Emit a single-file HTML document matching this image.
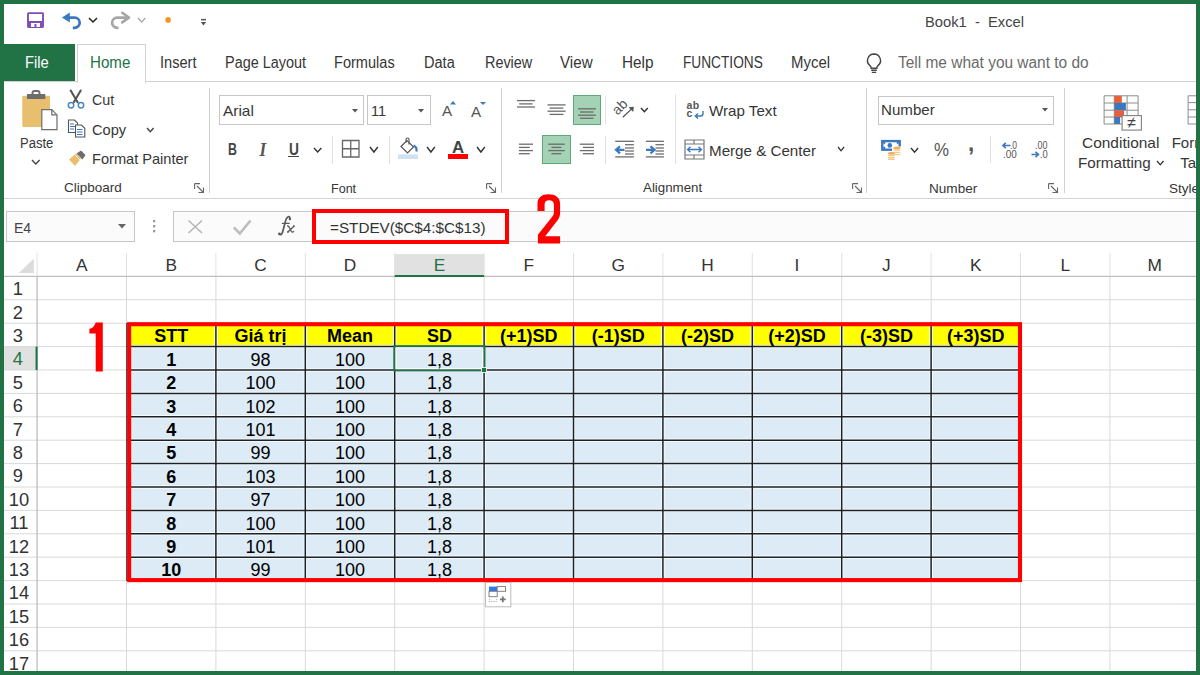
<!DOCTYPE html>
<html><head><meta charset="utf-8"><style>
html,body{margin:0;padding:0}
body{width:1200px;height:675px;overflow:hidden;position:relative;background:#fff;font-family:"Liberation Sans",sans-serif}
#frame{position:absolute;left:0;top:0;width:1192px;height:667px;border:4px solid #217346;pointer-events:none}
.t{position:absolute;white-space:nowrap;line-height:1;font-family:"Liberation Sans",sans-serif}
.r{position:absolute;box-sizing:content-box}
.s{position:absolute;overflow:visible}
</style></head><body>
<svg class="s" style="left:27px;top:12px" width="17" height="16" viewBox="0 0 17 16"><path d="M1.6 1.1h13.8a0.6 0.6 0 0 1 .6.6v12.8a0.6 0.6 0 0 1-.6.6H1.6a0.6 0.6 0 0 1-.6-.6V1.7a0.6 0.6 0 0 1 .6-.6z" fill="none" stroke="#7f4fb9" stroke-width="1.9"/><rect x="1" y="9" width="15" height="6" fill="#7f4fb9"/><rect x="4" y="11" width="9" height="4" fill="#fff"/><rect x="7.5" y="12" width="2" height="3" fill="#7f4fb9"/></svg>
<svg class="s" style="left:61px;top:12px" width="21" height="17" viewBox="0 0 21 17"><path d="M1 5.6L8.8 0.6V10.6z" fill="#3a78c0"/><path d="M8 5.6H13.6A5.1 5.1 0 0 1 13.6 15.8H11.8" fill="none" stroke="#3a78c0" stroke-width="2.7"/></svg>
<svg class="s" style="left:87.7px;top:17px" width="10" height="6" viewBox="0 0 10 6"><path d="M1 1L5.0 5L9 1" fill="none" stroke="#222" stroke-width="1.5"/></svg>
<svg class="s" style="left:109px;top:12px" width="21" height="17" viewBox="0 0 21 17"><path d="M20 5.6L13.2 0.8M20 5.6L13.2 10.4" fill="none" stroke="#a6a6a6" stroke-width="2.6" stroke-linecap="round"/><path d="M18 5.6H8.2A5.1 5.1 0 0 0 8.2 15.8H9.5" fill="none" stroke="#a6a6a6" stroke-width="2.7"/></svg>
<svg class="s" style="left:137px;top:17px" width="9.3" height="6" viewBox="0 0 9.3 6"><path d="M1 1L4.65 5L8.3 1" fill="none" stroke="#a6a6a6" stroke-width="1.2"/></svg>
<svg class="s" style="left:164px;top:16px" width="8" height="8" viewBox="0 0 8 8"><circle cx="4.1" cy="3.9" r="2.8" fill="#f7941d"/></svg>
<svg class="s" style="left:199px;top:17px" width="9" height="10" viewBox="0 0 9 10"><rect x="2" y="1.9" width="5" height="1.5" fill="#555"/><path d="M1.8 4.9h5.4L4.5 8.4z" fill="#555"/></svg>
<div class="t" style="left:925.00px;top:14.00px;font-size:15px;color:#444;transform:scaleX(0.9814);transform-origin:0.00px 0;">Book1&nbsp;&nbsp;-&nbsp;&nbsp;Excel</div>
<div class="r" style="left:4px;top:44px;width:71.00px;height:37.00px;background:#217346;"></div>
<div class="t" style="left:25.00px;top:55.00px;font-size:15.8px;color:#fff;transform:scaleX(0.9317);transform-origin:0.00px 0;">File</div>
<div class="r" style="left:77px;top:44px;width:67px;height:38px;border:1px solid #d2d2d2;border-bottom:none;background:#fff"></div>
<div class="r" style="left:4px;top:81px;width:73.00px;height:1.00px;background:#d2d2d2;"></div>
<div class="r" style="left:145px;top:81px;width:1051.00px;height:1.00px;background:#d2d2d2;"></div>
<div class="t" style="left:89.60px;top:55.00px;font-size:15.8px;color:#217346;transform:scaleX(0.9577);transform-origin:0.00px 0;">Home</div>
<div class="t" style="left:159.50px;top:55.00px;font-size:15.8px;color:#363636;transform:scaleX(0.9241);transform-origin:0.00px 0;">Insert</div>
<div class="t" style="left:224.80px;top:55.00px;font-size:15.8px;color:#363636;transform:scaleX(0.9141);transform-origin:0.00px 0;">Page Layout</div>
<div class="t" style="left:334.00px;top:55.00px;font-size:15.8px;color:#363636;transform:scaleX(0.9213);transform-origin:0.00px 0;">Formulas</div>
<div class="t" style="left:424.20px;top:55.00px;font-size:15.8px;color:#363636;transform:scaleX(0.9217);transform-origin:0.00px 0;">Data</div>
<div class="t" style="left:484.80px;top:55.00px;font-size:15.8px;color:#363636;transform:scaleX(0.9108);transform-origin:0.00px 0;">Review</div>
<div class="t" style="left:560.00px;top:55.00px;font-size:15.8px;color:#363636;transform:scaleX(0.9597);transform-origin:0.00px 0;">View</div>
<div class="t" style="left:622.00px;top:55.00px;font-size:15.8px;color:#363636;transform:scaleX(0.9702);transform-origin:0.00px 0;">Help</div>
<div class="t" style="left:682.50px;top:55.00px;font-size:15.8px;color:#363636;transform:scaleX(0.8656);transform-origin:0.00px 0;">FUNCTIONS</div>
<div class="t" style="left:791.00px;top:55.00px;font-size:15.8px;color:#363636;transform:scaleX(0.9457);transform-origin:0.00px 0;">Mycel</div>
<svg class="s" style="left:864px;top:52px" width="20" height="22" viewBox="0 0 20 22"><path d="M10 2a6.5 6.5 0 0 0-4 11.6c.8.7 1.2 1.6 1.2 2.6h5.6c0-1 .4-1.9 1.2-2.6A6.5 6.5 0 0 0 10 2z" fill="none" stroke="#444" stroke-width="1.4"/><path d="M7.2 18.2h5.6M7.8 20.4h4.4" stroke="#444" stroke-width="1.4"/></svg>
<div class="t" style="left:898.00px;top:55.00px;font-size:15.8px;color:#6a6a6a;transform:scaleX(0.9781);transform-origin:0.00px 0;">Tell me what you want to do</div>
<div class="r" style="left:4px;top:198px;width:1192.00px;height:1.00px;background:#d4d4d4;"></div>
<div class="r" style="left:208.5px;top:88px;width:1.00px;height:105.00px;background:#d0d0d0;"></div>
<div class="r" style="left:501px;top:88px;width:1.00px;height:105.00px;background:#d0d0d0;"></div>
<div class="r" style="left:866px;top:88px;width:1.00px;height:105.00px;background:#d0d0d0;"></div>
<div class="r" style="left:1063.7px;top:88px;width:1.00px;height:105.00px;background:#d0d0d0;"></div>
<svg class="s" style="left:21px;top:90px" width="38" height="41" viewBox="0 0 38 41"><rect x="1.3" y="5.7" width="27.7" height="31.3" rx="1" fill="#e8bf6e"/><path d="M6 4h18.3v5H6z" fill="#6d6d6d"/><rect x="11.5" y="1" width="7" height="5" rx="2" fill="none" stroke="#6d6d6d" stroke-width="2"/><path d="M20.8 19.7h10l5.2 5.2v14.8H20.8z" fill="#fff" stroke="#6d6d6d" stroke-width="1.2"/><path d="M30.8 19.7v5.2h5.2" fill="none" stroke="#6d6d6d" stroke-width="1.2"/></svg>
<div class="t" style="left:20.00px;top:135.70px;font-size:14px;color:#363636;transform:scaleX(0.9309);transform-origin:0.00px 0;">Paste</div>
<svg class="s" style="left:31.4px;top:159px" width="9.6" height="6" viewBox="0 0 9.6 6"><path d="M1 1L4.8 5L8.6 1" fill="none" stroke="#444" stroke-width="1.4"/></svg>
<svg class="s" style="left:66px;top:88px" width="20" height="22" viewBox="0 0 20 22"><path d="M4.7 2.5L11.6 14.2M14.7 2.5L7.8 14.2" stroke="#555" stroke-width="2.1" fill="none" stroke-linecap="round"/><circle cx="5" cy="17.3" r="2.7" fill="none" stroke="#4a86c8" stroke-width="1.5"/><circle cx="15" cy="17.3" r="2.7" fill="none" stroke="#4a86c8" stroke-width="1.5"/></svg>
<div class="t" style="left:91.50px;top:92.20px;font-size:15px;color:#363636;transform:scaleX(0.9518);transform-origin:0.00px 0;">Cut</div>
<svg class="s" style="left:67px;top:119px" width="20" height="20" viewBox="0 0 20 20"><path d="M1.5 1h6l3 3v9.5H1.5z" fill="#fff" stroke="#555" stroke-width="1.1"/><path d="M3 5h4M3 7.5h5M3 10h4" stroke="#3a78c0" stroke-width="1.1"/><path d="M8.5 6h6l3.3 3.3V18H8.5z" fill="#fff" stroke="#555" stroke-width="1.1"/><path d="M10 10.5h5.5M10 13h5.5M10 15.5h5.5" stroke="#3a78c0" stroke-width="1.1"/></svg>
<div class="t" style="left:91.50px;top:121.50px;font-size:15px;color:#363636;transform:scaleX(0.9736);transform-origin:0.00px 0;">Copy</div>
<svg class="s" style="left:146.4px;top:126.5px" width="8.6" height="5.8" viewBox="0 0 8.6 5.8"><path d="M1 1L4.3 4.8L7.6 1" fill="none" stroke="#444" stroke-width="1.4"/></svg>
<svg class="s" style="left:68px;top:150px" width="19" height="17" viewBox="0 0 19 17"><path d="M1 9.5l7-6 5 5-6 7.5z" fill="#e8bf6e"/><path d="M8.5 3.5l4.5-3 4.5 4.5-3 4.5z" fill="#6d6d6d"/><path d="M7.5 5.5l5 5" stroke="#fff" stroke-width="1"/></svg>
<div class="t" style="left:91.90px;top:151.40px;font-size:15px;color:#363636;transform:scaleX(0.9725);transform-origin:0.00px 0;">Format Painter</div>
<div class="t" style="left:63.60px;top:181.45px;font-size:13.5px;color:#363636;transform:scaleX(1.0003);transform-origin:0.00px 0;">Clipboard</div>
<svg class="s" style="left:194px;top:183px" width="11" height="10" viewBox="0 0 11 10"><path d="M0.6 0.6h5.4M0.6 0.6v5.4" stroke="#666" stroke-width="1.1"/><path d="M3 3l6.5 6.5M9.5 4.5v5h-5" fill="none" stroke="#666" stroke-width="1.1"/></svg>
<div class="r" style="left:219px;top:95px;width:143px;height:27.5px;border:1px solid #c6c6c6;background:#fff"></div>
<div class="t" style="left:222.70px;top:102.60px;font-size:15px;color:#363636;transform:scaleX(1.0267);transform-origin:0.00px 0;">Arial</div>
<svg class="s" style="left:352px;top:108.5px" width="6" height="3.5" viewBox="0 0 6 3.5"><path d="M0 0h6L3 3.5z" fill="#555"/></svg>
<div class="r" style="left:367px;top:95px;width:61.5px;height:27.5px;border:1px solid #c6c6c6;background:#fff"></div>
<div class="t" style="left:370.50px;top:102.60px;font-size:15px;color:#363636;transform:scaleX(0.9615);transform-origin:0.00px 0;">11</div>
<svg class="s" style="left:418px;top:108.5px" width="6" height="3.5" viewBox="0 0 6 3.5"><path d="M0 0h6L3 3.5z" fill="#555"/></svg>
<div class="t" style="left:442.00px;top:102.70px;font-size:15px;color:#555;transform:scaleX(1.0149);transform-origin:0.00px 0;">A</div>
<svg class="s" style="left:450px;top:100.5px" width="6" height="3.5" viewBox="0 0 6 3.5"><path d="M0 3.5h6L3 0z" fill="#3a78c0"/></svg>
<div class="t" style="left:471.40px;top:103.80px;font-size:15px;color:#555;transform:scaleX(1.0149);transform-origin:0.00px 0;">A</div>
<svg class="s" style="left:479.6px;top:101.5px" width="6" height="3" viewBox="0 0 6 3"><path d="M0 0h6L3 3z" fill="#3a78c0"/></svg>
<div class="t" style="left:228.30px;top:140.95px;font-size:16.5px;color:#444;font-weight:bold;transform:scaleX(0.7492);transform-origin:0.00px 0;">B</div>
<div class="t" style="left:259.5px;top:140.5px;font-family:'Liberation Serif';font-style:italic;font-size:17px;color:#555;font-weight:bold;transform:scaleY(1.08);transform-origin:0 0">I</div>
<div class="t" style="left:289.00px;top:141.70px;font-size:16px;color:#444;font-weight:bold;transform:scaleX(0.8594);transform-origin:0.00px 0;">U</div>
<div class="r" style="left:288.3px;top:156.2px;width:11.20px;height:1.20px;background:#444;"></div>
<svg class="s" style="left:312.6px;top:146.7px" width="9.3" height="6" viewBox="0 0 9.3 6"><path d="M1 1L4.65 5L8.3 1" fill="none" stroke="#333" stroke-width="1.4"/></svg>
<div class="r" style="left:332px;top:136px;width:1.00px;height:28.00px;background:#e1e1e1;"></div>
<svg class="s" style="left:341px;top:139px" width="20" height="19" viewBox="0 0 20 19"><path d="M1.5 1.5h16.5v16.5H1.5zM9.75 1.5v16.5M1.5 9.75h16.5" fill="none" stroke="#666" stroke-width="1.3"/></svg>
<svg class="s" style="left:369.4px;top:146px" width="9.8" height="7" viewBox="0 0 9.8 7"><path d="M1 1L4.9 6L8.8 1" fill="none" stroke="#333" stroke-width="1.4"/></svg>
<div class="r" style="left:389px;top:136px;width:1.00px;height:28.00px;background:#e1e1e1;"></div>
<svg class="s" style="left:397px;top:138px" width="22" height="22" viewBox="0 0 22 22"><rect x="1" y="16.4" width="20" height="4.6" fill="#cfe2f3"/><path d="M4 8.5l6-6 6.5 6.5-6 6z" fill="#fff" stroke="#555" stroke-width="1.2"/><path d="M9 4.5V1.5a1.5 1.5 0 0 1 3 0v5" fill="none" stroke="#555" stroke-width="1.1"/><path d="M16.5 7.5c2.5 1 3.5 3 3 6" fill="none" stroke="#3a78c0" stroke-width="2.2"/></svg>
<svg class="s" style="left:426px;top:146px" width="9.8" height="7" viewBox="0 0 9.8 7"><path d="M1 1L4.9 6L8.8 1" fill="none" stroke="#333" stroke-width="1.4"/></svg>
<div class="t" style="left:451.80px;top:138.70px;font-size:17px;color:#444;font-weight:bold;transform:scaleX(0.9886);transform-origin:0.00px 0;">A</div>
<div class="r" style="left:447.8px;top:154.1px;width:20.30px;height:5.20px;background:#ff0000;"></div>
<svg class="s" style="left:475.6px;top:146px" width="9.8" height="7" viewBox="0 0 9.8 7"><path d="M1 1L4.9 6L8.8 1" fill="none" stroke="#333" stroke-width="1.4"/></svg>
<div class="t" style="left:331.20px;top:181.65px;font-size:13.5px;color:#363636;transform:scaleX(0.9296);transform-origin:0.00px 0;">Font</div>
<svg class="s" style="left:486.2px;top:183.3px" width="11" height="10" viewBox="0 0 11 10"><path d="M0.6 0.6h5.4M0.6 0.6v5.4" stroke="#666" stroke-width="1.1"/><path d="M3 3l6.5 6.5M9.5 4.5v5h-5" fill="none" stroke="#666" stroke-width="1.1"/></svg>
<svg class="s" style="left:0px;top:0px" width="1200" height="675" viewBox="0 0 1200 675"><line x1="517" x2="535" y1="100.6" y2="100.6" stroke="#6d6d6d" stroke-width="1.3"/><line x1="519.2" x2="532.6" y1="103.9" y2="103.9" stroke="#6d6d6d" stroke-width="1.3"/><line x1="517" x2="535" y1="107" y2="107" stroke="#6d6d6d" stroke-width="1.3"/></svg>
<svg class="s" style="left:0px;top:0px" width="1200" height="675" viewBox="0 0 1200 675"><line x1="547.5" x2="565.6" y1="104.9" y2="104.9" stroke="#6d6d6d" stroke-width="1.3"/><line x1="549.6" x2="563.4" y1="108.1" y2="108.1" stroke="#6d6d6d" stroke-width="1.3"/><line x1="547.5" x2="565.6" y1="111.2" y2="111.2" stroke="#6d6d6d" stroke-width="1.3"/><line x1="549.6" x2="563.4" y1="114.4" y2="114.4" stroke="#6d6d6d" stroke-width="1.3"/></svg>
<div class="r" style="left:573px;top:95.4px;width:26px;height:27.3px;border:1px solid #5fa878;background:#a3d2b5"></div>
<svg class="s" style="left:0px;top:0px" width="1200" height="675" viewBox="0 0 1200 675"><line x1="578" x2="596" y1="108.8" y2="108.8" stroke="#6d6d6d" stroke-width="1.3"/><line x1="580" x2="593.5" y1="112" y2="112" stroke="#6d6d6d" stroke-width="1.3"/><line x1="578" x2="596" y1="115.2" y2="115.2" stroke="#6d6d6d" stroke-width="1.3"/><line x1="580" x2="593.5" y1="118.3" y2="118.3" stroke="#6d6d6d" stroke-width="1.3"/></svg>
<div class="r" style="left:605.2px;top:96.4px;width:1.00px;height:27.60px;background:#e1e1e1;"></div>
<svg class="s" style="left:612px;top:98px" width="26" height="22" viewBox="0 0 26 22"><text x="0" y="0" transform="translate(5.6 17.8) rotate(-45)" font-family="Liberation Sans" font-size="14" fill="#555">ab</text><path d="M10.8 19.2L21.2 9.4" fill="none" stroke="#555" stroke-width="1.3"/><path d="M16.5 9.3l5.3-0.6-0.6 5.3z" fill="#555"/></svg>
<svg class="s" style="left:639.8px;top:107.1px" width="8.8" height="5.7" viewBox="0 0 8.8 5.7"><path d="M1 1L4.4 4.7L7.8 1" fill="none" stroke="#333" stroke-width="1.5"/></svg>
<svg class="s" style="left:0px;top:0px" width="1200" height="675" viewBox="0 0 1200 675"><line x1="518.9" x2="533" y1="144.2" y2="144.2" stroke="#6d6d6d" stroke-width="1.3"/><line x1="518.9" x2="529.8" y1="147.4" y2="147.4" stroke="#6d6d6d" stroke-width="1.3"/><line x1="518.9" x2="533" y1="150.6" y2="150.6" stroke="#6d6d6d" stroke-width="1.3"/><line x1="518.9" x2="529.8" y1="153.7" y2="153.7" stroke="#6d6d6d" stroke-width="1.3"/></svg>
<div class="r" style="left:542.3px;top:135.3px;width:26.6px;height:27.1px;border:1px solid #5fa878;background:#a3d2b5"></div>
<svg class="s" style="left:0px;top:0px" width="1200" height="675" viewBox="0 0 1200 675"><line x1="548.2" x2="564.8" y1="144.2" y2="144.2" stroke="#6d6d6d" stroke-width="1.3"/><line x1="551.5" x2="561.4" y1="147.4" y2="147.4" stroke="#6d6d6d" stroke-width="1.3"/><line x1="548.2" x2="564.8" y1="150.6" y2="150.6" stroke="#6d6d6d" stroke-width="1.3"/><line x1="551.5" x2="561.4" y1="153.7" y2="153.7" stroke="#6d6d6d" stroke-width="1.3"/></svg>
<svg class="s" style="left:0px;top:0px" width="1200" height="675" viewBox="0 0 1200 675"><line x1="579.8" x2="594" y1="144.2" y2="144.2" stroke="#6d6d6d" stroke-width="1.3"/><line x1="582.9" x2="594" y1="147.4" y2="147.4" stroke="#6d6d6d" stroke-width="1.3"/><line x1="579.8" x2="594" y1="150.6" y2="150.6" stroke="#6d6d6d" stroke-width="1.3"/><line x1="582.9" x2="594" y1="153.7" y2="153.7" stroke="#6d6d6d" stroke-width="1.3"/></svg>
<div class="r" style="left:605.2px;top:136px;width:1.00px;height:27.70px;background:#e1e1e1;"></div>
<svg class="s" style="left:0px;top:0px" width="1200" height="675" viewBox="0 0 1200 675"><line x1="615.2" x2="633.9" y1="141.3" y2="141.3" stroke="#6d6d6d" stroke-width="1.3"/><line x1="625" x2="633.9" y1="144.7" y2="144.7" stroke="#6d6d6d" stroke-width="1.3"/><line x1="625" x2="633.9" y1="148" y2="148" stroke="#6d6d6d" stroke-width="1.3"/><line x1="625" x2="633.9" y1="151" y2="151" stroke="#6d6d6d" stroke-width="1.3"/><line x1="625" x2="633.9" y1="154" y2="154" stroke="#6d6d6d" stroke-width="1.3"/><line x1="615.2" x2="633.9" y1="156.9" y2="156.9" stroke="#6d6d6d" stroke-width="1.3"/></svg>
<svg class="s" style="left:614px;top:145px" width="12" height="10" viewBox="0 0 12 10"><path d="M10.5 4.8H3M6 1.3L2 4.8 6 8.3" fill="none" stroke="#3a78c0" stroke-width="2.2"/></svg>
<svg class="s" style="left:0px;top:0px" width="1200" height="675" viewBox="0 0 1200 675"><line x1="645.9" x2="663.9" y1="141.3" y2="141.3" stroke="#6d6d6d" stroke-width="1.3"/><line x1="655.5" x2="663.9" y1="144.7" y2="144.7" stroke="#6d6d6d" stroke-width="1.3"/><line x1="655.5" x2="663.9" y1="148" y2="148" stroke="#6d6d6d" stroke-width="1.3"/><line x1="655.5" x2="663.9" y1="151" y2="151" stroke="#6d6d6d" stroke-width="1.3"/><line x1="655.5" x2="663.9" y1="154" y2="154" stroke="#6d6d6d" stroke-width="1.3"/><line x1="645.9" x2="663.9" y1="156.9" y2="156.9" stroke="#6d6d6d" stroke-width="1.3"/></svg>
<svg class="s" style="left:645px;top:145px" width="12" height="10" viewBox="0 0 12 10"><path d="M1 4.8h7.5M5.5 1.3l4 3.5-4 3.5" fill="none" stroke="#3a78c0" stroke-width="2.2"/></svg>
<div class="r" style="left:675.1px;top:94px;width:1.00px;height:70.00px;background:#e1e1e1;"></div>
<div class="t" style="left:686.5px;top:99.5px;font-size:10.5px;line-height:10px;color:#555;font-weight:bold;letter-spacing:0.3px">ab</div>
<div class="t" style="left:686.5px;top:107.8px;font-size:10.5px;line-height:10px;color:#555;font-weight:bold">c</div>
<svg class="s" style="left:693px;top:110px" width="12" height="9" viewBox="0 0 12 9"><path d="M10 1v2.5a2.5 2.5 0 0 1-2.5 2.5H3M5 3.5L2.3 6 5 8.5" fill="none" stroke="#3a78c0" stroke-width="1.4"/></svg>
<div class="t" style="left:709.00px;top:103.00px;font-size:15px;color:#363636;transform:scaleX(1.0093);transform-origin:0.00px 0;">Wrap Text</div>
<svg class="s" style="left:684px;top:138.5px" width="21" height="21" viewBox="0 0 21 21"><path d="M1 1h19v19H1zM1 5h19M1 16h19M10 1v4M10 16v4" fill="none" stroke="#777" stroke-width="1.2"/><path d="M3.5 10.5h14M6.5 7.8L3.5 10.5 6.5 13.2M14.5 7.8l3 2.7-3 2.7" fill="none" stroke="#3a78c0" stroke-width="1.3"/></svg>
<div class="t" style="left:709.00px;top:142.50px;font-size:15px;color:#363636;transform:scaleX(1.0104);transform-origin:0.00px 0;">Merge &amp; Center</div>
<svg class="s" style="left:837.3px;top:146.2px" width="8.1" height="5.8" viewBox="0 0 8.1 5.8"><path d="M1 1L4.05 4.8L7.1 1" fill="none" stroke="#333" stroke-width="1.3"/></svg>
<div class="t" style="left:642.80px;top:181.35px;font-size:13.5px;color:#363636;transform:scaleX(0.9865);transform-origin:0.00px 0;">Alignment</div>
<svg class="s" style="left:851.5px;top:183.3px" width="11" height="10" viewBox="0 0 11 10"><path d="M0.6 0.6h5.4M0.6 0.6v5.4" stroke="#666" stroke-width="1.1"/><path d="M3 3l6.5 6.5M9.5 4.5v5h-5" fill="none" stroke="#666" stroke-width="1.1"/></svg>
<div class="r" style="left:877.6px;top:95.6px;width:174.4px;height:27.2px;border:1px solid #c6c6c6;background:#fff"></div>
<div class="t" style="left:881.30px;top:102.40px;font-size:15px;color:#363636;transform:scaleX(1.0070);transform-origin:0.00px 0;">Number</div>
<svg class="s" style="left:1042px;top:108.3px" width="6" height="3.5" viewBox="0 0 6 3.5"><path d="M0 0h6L3 3.5z" fill="#555"/></svg>
<svg class="s" style="left:880px;top:139px" width="23" height="22" viewBox="0 0 23 22"><rect x="2.3" y="2.1" width="17.4" height="8.6" fill="none" stroke="#3a78c0" stroke-width="2.4"/><path d="M3.5 4.5l1.5-1.3M18.5 4.5l-1.5-1.3M3.5 8.3l1.5 1.3" stroke="#3a78c0" stroke-width="2"/><circle cx="9.8" cy="6.4" r="2.3" fill="#3a78c0"/><rect x="12" y="7.5" width="10" height="9.5" fill="#fff"/><rect x="7" y="12.5" width="8.5" height="8.5" fill="#fff"/><ellipse cx="16.9" cy="8.9" rx="3.6" ry="1.5" fill="#f5ad55"/><path d="M13.6 11.2h6.8M13.6 13.4h6.8M13.6 15.6h6.8" stroke="#f7c98e" stroke-width="1.3"/><ellipse cx="11.4" cy="14.4" rx="3.4" ry="1.4" fill="#f5ad55"/><path d="M8.1 16.6h6.6M8.1 18.7h6.6" stroke="#f7c98e" stroke-width="1.3"/><path d="M8.1 20.2h6.6" stroke="#f5ad55" stroke-width="1"/></svg>
<svg class="s" style="left:909.6px;top:146.7px" width="9.1" height="6.1" viewBox="0 0 9.1 6.1"><path d="M1 1L4.55 5.1L8.1 1" fill="none" stroke="#333" stroke-width="1.4"/></svg>
<div class="t" style="left:933.60px;top:140.10px;font-size:19px;color:#555;transform:scaleX(0.8870);transform-origin:0.00px 0;">%</div>
<div class="t" style="left:968.40px;top:131.00px;font-size:24px;color:#555;font-weight:bold;transform:scaleX(0.9375);transform-origin:0.00px 0;">,</div>
<div class="r" style="left:990px;top:136.3px;width:1.00px;height:26.90px;background:#e1e1e1;"></div>
<svg class="s" style="left:1000.5px;top:142px" width="10" height="7" viewBox="0 0 10 7"><path d="M9.5 3.5H2M4.8 0.9L1.9 3.5 4.8 6.1" fill="none" stroke="#3a78c0" stroke-width="1.6"/></svg>
<div class="t" style="left:1009.60px;top:140.50px;font-size:10px;color:#555;transform:scaleX(0.8503);transform-origin:0.00px 0;">.0</div>
<div class="t" style="left:1002.90px;top:149.50px;font-size:10px;color:#555;transform:scaleX(0.9928);transform-origin:0.00px 0;">.00</div>
<div class="t" style="left:1034.90px;top:140.50px;font-size:10px;color:#555;transform:scaleX(0.8921);transform-origin:0.00px 0;">.00</div>
<svg class="s" style="left:1031px;top:150.5px" width="9" height="7" viewBox="0 0 9 7"><path d="M0.5 3.5H7M4.5 0.9L7.4 3.5 4.5 6.1" fill="none" stroke="#3a78c0" stroke-width="1.6"/></svg>
<div class="t" style="left:1039.50px;top:149.50px;font-size:10px;color:#555;transform:scaleX(0.9341);transform-origin:0.00px 0;">.0</div>
<div class="t" style="left:929.40px;top:181.75px;font-size:13.5px;color:#363636;transform:scaleX(1.0043);transform-origin:0.00px 0;">Number</div>
<svg class="s" style="left:1048.4px;top:183.4px" width="11" height="10" viewBox="0 0 11 10"><path d="M0.6 0.6h5.4M0.6 0.6v5.4" stroke="#666" stroke-width="1.1"/><path d="M3 3l6.5 6.5M9.5 4.5v5h-5" fill="none" stroke="#666" stroke-width="1.1"/></svg>
<svg class="s" style="left:1103px;top:94.5px" width="40" height="36" viewBox="0 0 40 36"><g fill="none" stroke="#8c8c8c" stroke-width="1"><path d="M1.1 0.8h34v28.2h-34z"/><path d="M1.1 8h34M1.1 15.2h34M1.1 22h34M11.3 0.8v28.2M24.1 0.8v28.2"/></g><rect x="11.3" y="0.8" width="7.5" height="7.2" fill="#e5603b"/><rect x="11.3" y="8" width="11.6" height="7.2" fill="#3a78c0"/><rect x="11.3" y="15.2" width="9.7" height="6.8" fill="#e5603b"/><rect x="11.3" y="22" width="5.8" height="7" fill="#3a78c0"/><rect x="19.1" y="20.6" width="19.3" height="14.5" fill="#fff" stroke="#808080" stroke-width="1.1"/><text x="28.75" y="32.5" font-family="Liberation Sans" font-size="16" fill="#444" text-anchor="middle">≠</text></svg>
<div class="t" style="left:1082.40px;top:135.00px;font-size:15px;color:#363636;transform:scaleX(1.0310);transform-origin:0.00px 0;">Conditional</div>
<div class="t" style="left:1077.60px;top:155.00px;font-size:15px;color:#363636;transform:scaleX(1.0153);transform-origin:0.00px 0;">Formatting</div>
<svg class="s" style="left:1155.5px;top:159.5px" width="8.5" height="5.8" viewBox="0 0 8.5 5.8"><path d="M1 1L4.25 4.8L7.5 1" fill="none" stroke="#333" stroke-width="1.3"/></svg>
<svg class="s" style="left:1186.5px;top:94.5px" width="10" height="30" viewBox="0 0 10 30"><g fill="none" stroke="#8c8c8c" stroke-width="1"><path d="M1.1 0.8h12v28.2h-12z"/><path d="M1.1 7.6h12M1.1 14.8h12M1.1 22h12"/></g></svg>
<div class="t" style="left:1171.70px;top:135.00px;font-size:15px;color:#363636;">Form</div>
<div class="t" style="left:1180.20px;top:155.00px;font-size:15px;color:#363636;">Tal</div>
<div class="t" style="left:1168.90px;top:181.75px;font-size:13.5px;color:#363636;">Style</div>
<div class="r" style="left:6.4px;top:211.4px;width:126.4px;height:29px;border:1px solid #c6c6c6;background:#fbfbfb"></div>
<div class="t" style="left:13.90px;top:219.60px;font-size:15px;color:#444;transform:scaleX(0.9361);transform-origin:0.00px 0;">E4</div>
<svg class="s" style="left:118px;top:224px" width="9" height="5" viewBox="0 0 9 5"><path d="M0 0h8L4 4.5z" fill="#666"/></svg>
<svg class="s" style="left:150px;top:218px" width="8" height="16" viewBox="0 0 8 16"><g fill="#9a9a9a"><rect x="3" y="2" width="2.3" height="2.3"/><rect x="3" y="7" width="2.3" height="2.3"/><rect x="3" y="12" width="2.3" height="2.3"/></g></svg>
<div class="r" style="left:173px;top:211.3px;width:1040px;height:29px;border:1px solid #c6c6c6;background:#fbfbfb"></div>
<svg class="s" style="left:187px;top:219px" width="18" height="16" viewBox="0 0 18 16"><path d="M1.5 1.5l13.5 12.5M15 1.5L1.5 14" stroke="#b4b4b4" stroke-width="1.5"/></svg>
<svg class="s" style="left:232px;top:219px" width="20" height="16" viewBox="0 0 20 16"><path d="M1.8 8.3l6 6.2L18.5 1.5" fill="none" stroke="#bdbdbd" stroke-width="2.6"/></svg>
<svg class="s" style="left:270px;top:210px" width="35" height="32" viewBox="0 0 35 32"><g fill="none" stroke="#5a5a5a" stroke-linecap="round"><path d="M19.8 9.3C20.4 7.4 19.4 6.3 18.2 6.8C16.4 7.5 15.6 10 14.9 13.5L12.6 22C11.9 24.5 10.6 25.2 9.3 24.2" stroke-width="1.7"/><path d="M12.4 13.3H19.2" stroke-width="1.3"/><path d="M17.6 16C19.2 16 20.2 18.6 21.2 21.3C21.7 22.3 22.8 22.4 23.7 21.6" stroke-width="1.3"/><path d="M24 16.2L17.8 22" stroke-width="1.3"/></g><circle cx="19.9" cy="9" r="1.2" fill="#5a5a5a"/><circle cx="9.4" cy="23.9" r="1.3" fill="#5a5a5a"/><circle cx="18.1" cy="21.8" r="0.9" fill="#5a5a5a"/><circle cx="23.9" cy="16.1" r="0.9" fill="#5a5a5a"/></svg>
<div class="t" style="left:329.90px;top:219.70px;font-size:15px;color:#333;transform:scaleX(1.0170);transform-origin:0.00px 0;">=STDEV($C$4:$C$13)</div>
<div class="r" style="left:312.1px;top:209.1px;width:188.7px;height:26.6px;border:4.1px solid #ff0000"></div>
<svg class="s" style="left:0px;top:0px" width="1200" height="675" viewBox="0 0 1200 675"><rect x="394.70" y="254" width="89.40" height="21.5" fill="#e1e1e1"/><rect x="4" y="346.60" width="31.5" height="23.40" fill="#e1e1e1"/><path d="M33.8 258.7V272.9H18.7z" fill="#dcdcdc"/><rect x="126.50" y="323.20" width="894.00" height="23.40" fill="#ffff00"/><rect x="126.50" y="346.60" width="894.00" height="234.00" fill="#ddebf7"/><line x1="4" x2="1196" y1="299.80" y2="299.80" stroke="#d9d9d9" stroke-width="1"/><line x1="4" x2="1196" y1="323.20" y2="323.20" stroke="#d9d9d9" stroke-width="1"/><line x1="4" x2="1196" y1="346.60" y2="346.60" stroke="#d9d9d9" stroke-width="1"/><line x1="4" x2="1196" y1="370.00" y2="370.00" stroke="#d9d9d9" stroke-width="1"/><line x1="4" x2="1196" y1="393.40" y2="393.40" stroke="#d9d9d9" stroke-width="1"/><line x1="4" x2="1196" y1="416.80" y2="416.80" stroke="#d9d9d9" stroke-width="1"/><line x1="4" x2="1196" y1="440.20" y2="440.20" stroke="#d9d9d9" stroke-width="1"/><line x1="4" x2="1196" y1="463.60" y2="463.60" stroke="#d9d9d9" stroke-width="1"/><line x1="4" x2="1196" y1="487.00" y2="487.00" stroke="#d9d9d9" stroke-width="1"/><line x1="4" x2="1196" y1="510.40" y2="510.40" stroke="#d9d9d9" stroke-width="1"/><line x1="4" x2="1196" y1="533.80" y2="533.80" stroke="#d9d9d9" stroke-width="1"/><line x1="4" x2="1196" y1="557.20" y2="557.20" stroke="#d9d9d9" stroke-width="1"/><line x1="4" x2="1196" y1="580.60" y2="580.60" stroke="#d9d9d9" stroke-width="1"/><line x1="4" x2="1196" y1="604.00" y2="604.00" stroke="#d9d9d9" stroke-width="1"/><line x1="4" x2="1196" y1="627.40" y2="627.40" stroke="#d9d9d9" stroke-width="1"/><line x1="4" x2="1196" y1="650.80" y2="650.80" stroke="#d9d9d9" stroke-width="1"/><line x1="126.50" x2="126.50" y1="252.8" y2="276.4" stroke="#e2e2e2" stroke-width="1"/><line x1="126.50" x2="126.50" y1="276.4" y2="671" stroke="#d9d9d9" stroke-width="1"/><line x1="215.90" x2="215.90" y1="252.8" y2="276.4" stroke="#e2e2e2" stroke-width="1"/><line x1="215.90" x2="215.90" y1="276.4" y2="671" stroke="#d9d9d9" stroke-width="1"/><line x1="305.30" x2="305.30" y1="252.8" y2="276.4" stroke="#e2e2e2" stroke-width="1"/><line x1="305.30" x2="305.30" y1="276.4" y2="671" stroke="#d9d9d9" stroke-width="1"/><line x1="394.70" x2="394.70" y1="252.8" y2="276.4" stroke="#e2e2e2" stroke-width="1"/><line x1="394.70" x2="394.70" y1="276.4" y2="671" stroke="#d9d9d9" stroke-width="1"/><line x1="484.10" x2="484.10" y1="252.8" y2="276.4" stroke="#e2e2e2" stroke-width="1"/><line x1="484.10" x2="484.10" y1="276.4" y2="671" stroke="#d9d9d9" stroke-width="1"/><line x1="573.50" x2="573.50" y1="252.8" y2="276.4" stroke="#e2e2e2" stroke-width="1"/><line x1="573.50" x2="573.50" y1="276.4" y2="671" stroke="#d9d9d9" stroke-width="1"/><line x1="662.90" x2="662.90" y1="252.8" y2="276.4" stroke="#e2e2e2" stroke-width="1"/><line x1="662.90" x2="662.90" y1="276.4" y2="671" stroke="#d9d9d9" stroke-width="1"/><line x1="752.30" x2="752.30" y1="252.8" y2="276.4" stroke="#e2e2e2" stroke-width="1"/><line x1="752.30" x2="752.30" y1="276.4" y2="671" stroke="#d9d9d9" stroke-width="1"/><line x1="841.70" x2="841.70" y1="252.8" y2="276.4" stroke="#e2e2e2" stroke-width="1"/><line x1="841.70" x2="841.70" y1="276.4" y2="671" stroke="#d9d9d9" stroke-width="1"/><line x1="931.10" x2="931.10" y1="252.8" y2="276.4" stroke="#e2e2e2" stroke-width="1"/><line x1="931.10" x2="931.10" y1="276.4" y2="671" stroke="#d9d9d9" stroke-width="1"/><line x1="1020.50" x2="1020.50" y1="252.8" y2="276.4" stroke="#e2e2e2" stroke-width="1"/><line x1="1020.50" x2="1020.50" y1="276.4" y2="671" stroke="#d9d9d9" stroke-width="1"/><line x1="1109.90" x2="1109.90" y1="252.8" y2="276.4" stroke="#e2e2e2" stroke-width="1"/><line x1="1109.90" x2="1109.90" y1="276.4" y2="671" stroke="#d9d9d9" stroke-width="1"/><line x1="4" x2="1196" y1="276.4" y2="276.4" stroke="#bfbfbf" stroke-width="1.2"/><line x1="37.1" x2="37.1" y1="252.8" y2="276.4" stroke="#e2e2e2" stroke-width="1"/><line x1="37.1" x2="37.1" y1="276.4" y2="671" stroke="#c2c2c2" stroke-width="1.4"/><line x1="126.50" x2="1020.50" y1="346.60" y2="346.60" stroke="#f6fbff" stroke-width="3.4"/><line x1="126.50" x2="1020.50" y1="370.00" y2="370.00" stroke="#f6fbff" stroke-width="3.4"/><line x1="126.50" x2="1020.50" y1="393.40" y2="393.40" stroke="#f6fbff" stroke-width="3.4"/><line x1="126.50" x2="1020.50" y1="416.80" y2="416.80" stroke="#f6fbff" stroke-width="3.4"/><line x1="126.50" x2="1020.50" y1="440.20" y2="440.20" stroke="#f6fbff" stroke-width="3.4"/><line x1="126.50" x2="1020.50" y1="463.60" y2="463.60" stroke="#f6fbff" stroke-width="3.4"/><line x1="126.50" x2="1020.50" y1="487.00" y2="487.00" stroke="#f6fbff" stroke-width="3.4"/><line x1="126.50" x2="1020.50" y1="510.40" y2="510.40" stroke="#f6fbff" stroke-width="3.4"/><line x1="126.50" x2="1020.50" y1="533.80" y2="533.80" stroke="#f6fbff" stroke-width="3.4"/><line x1="126.50" x2="1020.50" y1="557.20" y2="557.20" stroke="#f6fbff" stroke-width="3.4"/><line x1="215.90" x2="215.90" y1="323.20" y2="580.60" stroke="#f6fbff" stroke-width="3.4"/><line x1="305.30" x2="305.30" y1="323.20" y2="580.60" stroke="#f6fbff" stroke-width="3.4"/><line x1="394.70" x2="394.70" y1="323.20" y2="580.60" stroke="#f6fbff" stroke-width="3.4"/><line x1="484.10" x2="484.10" y1="323.20" y2="580.60" stroke="#f6fbff" stroke-width="3.4"/><line x1="573.50" x2="573.50" y1="323.20" y2="580.60" stroke="#f6fbff" stroke-width="3.4"/><line x1="662.90" x2="662.90" y1="323.20" y2="580.60" stroke="#f6fbff" stroke-width="3.4"/><line x1="752.30" x2="752.30" y1="323.20" y2="580.60" stroke="#f6fbff" stroke-width="3.4"/><line x1="841.70" x2="841.70" y1="323.20" y2="580.60" stroke="#f6fbff" stroke-width="3.4"/><line x1="931.10" x2="931.10" y1="323.20" y2="580.60" stroke="#f6fbff" stroke-width="3.4"/><line x1="126.50" x2="1020.50" y1="346.60" y2="346.60" stroke="#1c2124" stroke-width="1.5"/><line x1="126.50" x2="1020.50" y1="370.00" y2="370.00" stroke="#1c2124" stroke-width="1.5"/><line x1="126.50" x2="1020.50" y1="393.40" y2="393.40" stroke="#1c2124" stroke-width="1.5"/><line x1="126.50" x2="1020.50" y1="416.80" y2="416.80" stroke="#1c2124" stroke-width="1.5"/><line x1="126.50" x2="1020.50" y1="440.20" y2="440.20" stroke="#1c2124" stroke-width="1.5"/><line x1="126.50" x2="1020.50" y1="463.60" y2="463.60" stroke="#1c2124" stroke-width="1.5"/><line x1="126.50" x2="1020.50" y1="487.00" y2="487.00" stroke="#1c2124" stroke-width="1.5"/><line x1="126.50" x2="1020.50" y1="510.40" y2="510.40" stroke="#1c2124" stroke-width="1.5"/><line x1="126.50" x2="1020.50" y1="533.80" y2="533.80" stroke="#1c2124" stroke-width="1.5"/><line x1="126.50" x2="1020.50" y1="557.20" y2="557.20" stroke="#1c2124" stroke-width="1.5"/><line x1="215.90" x2="215.90" y1="323.20" y2="580.60" stroke="#1c2124" stroke-width="1.5"/><line x1="305.30" x2="305.30" y1="323.20" y2="580.60" stroke="#1c2124" stroke-width="1.5"/><line x1="394.70" x2="394.70" y1="323.20" y2="580.60" stroke="#1c2124" stroke-width="1.5"/><line x1="484.10" x2="484.10" y1="323.20" y2="580.60" stroke="#1c2124" stroke-width="1.5"/><line x1="573.50" x2="573.50" y1="323.20" y2="580.60" stroke="#1c2124" stroke-width="1.5"/><line x1="662.90" x2="662.90" y1="323.20" y2="580.60" stroke="#1c2124" stroke-width="1.5"/><line x1="752.30" x2="752.30" y1="323.20" y2="580.60" stroke="#1c2124" stroke-width="1.5"/><line x1="841.70" x2="841.70" y1="323.20" y2="580.60" stroke="#1c2124" stroke-width="1.5"/><line x1="931.10" x2="931.10" y1="323.20" y2="580.60" stroke="#1c2124" stroke-width="1.5"/><rect x="394.70" y="275" width="89.40" height="2" fill="#217346"/><rect x="35.5" y="346.60" width="2.1" height="23.40" fill="#217346"/><rect x="394.30" y="346.20" width="90.20" height="24.20" fill="none" stroke="#217346" stroke-width="2"/><rect x="395.90" y="347.80" width="87.00" height="21.00" fill="none" stroke="#fff" stroke-width="0.9"/><rect x="481.60" y="367.50" width="5" height="5" fill="#217346" stroke="#fff" stroke-width="0.8"/><line x1="126.6" x2="126.6" y1="323" y2="581" stroke="#444" stroke-width="1"/><rect x="129.1" y="324.2" width="890.9" height="255.9" fill="none" stroke="#ff0000" stroke-width="4.1"/></svg>
<div class="t" style="left:76.03px;top:257.05px;font-size:17.3px;color:#333;">A</div>
<div class="t" style="left:165.43px;top:257.05px;font-size:17.3px;color:#333;">B</div>
<div class="t" style="left:254.35px;top:257.05px;font-size:17.3px;color:#333;">C</div>
<div class="t" style="left:343.75px;top:257.05px;font-size:17.3px;color:#333;">D</div>
<div class="t" style="left:433.63px;top:257.05px;font-size:17.3px;color:#217346;">E</div>
<div class="t" style="left:523.52px;top:257.05px;font-size:17.3px;color:#333;">F</div>
<div class="t" style="left:611.47px;top:257.05px;font-size:17.3px;color:#333;">G</div>
<div class="t" style="left:701.35px;top:257.05px;font-size:17.3px;color:#333;">H</div>
<div class="t" style="left:794.60px;top:257.05px;font-size:17.3px;color:#333;">I</div>
<div class="t" style="left:882.08px;top:257.05px;font-size:17.3px;color:#333;">J</div>
<div class="t" style="left:970.03px;top:257.05px;font-size:17.3px;color:#333;">K</div>
<div class="t" style="left:1060.39px;top:257.05px;font-size:17.3px;color:#333;">L</div>
<div class="t" style="left:1147.39px;top:257.05px;font-size:17.3px;color:#333;">M</div>
<div class="t" style="left:12.81px;top:280.25px;font-size:18.3px;color:#333;">1</div>
<div class="t" style="left:12.81px;top:303.65px;font-size:18.3px;color:#333;">2</div>
<div class="t" style="left:12.81px;top:327.05px;font-size:18.3px;color:#333;">3</div>
<div class="t" style="left:12.81px;top:350.45px;font-size:18.3px;color:#217346;">4</div>
<div class="t" style="left:12.81px;top:373.85px;font-size:18.3px;color:#333;">5</div>
<div class="t" style="left:12.81px;top:397.25px;font-size:18.3px;color:#333;">6</div>
<div class="t" style="left:12.81px;top:420.65px;font-size:18.3px;color:#333;">7</div>
<div class="t" style="left:12.81px;top:444.05px;font-size:18.3px;color:#333;">8</div>
<div class="t" style="left:12.81px;top:467.45px;font-size:18.3px;color:#333;">9</div>
<div class="t" style="left:8.72px;top:490.85px;font-size:18.3px;color:#333;">10</div>
<div class="t" style="left:9.40px;top:514.25px;font-size:18.3px;color:#333;">11</div>
<div class="t" style="left:8.72px;top:537.65px;font-size:18.3px;color:#333;">12</div>
<div class="t" style="left:8.72px;top:561.05px;font-size:18.3px;color:#333;">13</div>
<div class="t" style="left:8.72px;top:584.45px;font-size:18.3px;color:#333;">14</div>
<div class="t" style="left:8.72px;top:607.85px;font-size:18.3px;color:#333;">15</div>
<div class="t" style="left:8.72px;top:631.25px;font-size:18.3px;color:#333;">16</div>
<div class="t" style="left:8.72px;top:654.65px;font-size:18.3px;color:#333;">17</div>
<div class="t" style="left:154.20px;top:327.20px;font-size:18px;color:#000;font-weight:bold;">STT</div>
<div class="t" style="left:234.59px;top:327.20px;font-size:18px;color:#000;font-weight:bold;">Giá trị</div>
<div class="t" style="left:326.99px;top:327.20px;font-size:18px;color:#000;font-weight:bold;">Mean</div>
<div class="t" style="left:426.90px;top:327.20px;font-size:18px;color:#000;font-weight:bold;">SD</div>
<div class="t" style="left:500.04px;top:327.20px;font-size:18px;color:#000;font-weight:bold;">(+1)SD</div>
<div class="t" style="left:591.70px;top:327.20px;font-size:18px;color:#000;font-weight:bold;">(-1)SD</div>
<div class="t" style="left:681.10px;top:327.20px;font-size:18px;color:#000;font-weight:bold;">(-2)SD</div>
<div class="t" style="left:768.24px;top:327.20px;font-size:18px;color:#000;font-weight:bold;">(+2)SD</div>
<div class="t" style="left:859.90px;top:327.20px;font-size:18px;color:#000;font-weight:bold;">(-3)SD</div>
<div class="t" style="left:947.04px;top:327.20px;font-size:18px;color:#000;font-weight:bold;">(+3)SD</div>
<div class="t" style="left:166.19px;top:350.80px;font-size:18px;color:#000;font-weight:bold;">1</div>
<div class="t" style="left:250.59px;top:350.80px;font-size:18px;color:#000;">98</div>
<div class="t" style="left:334.98px;top:350.80px;font-size:18px;color:#000;">100</div>
<div class="t" style="left:426.89px;top:350.80px;font-size:18px;color:#000;">1,8</div>
<div class="t" style="left:166.19px;top:374.20px;font-size:18px;color:#000;font-weight:bold;">2</div>
<div class="t" style="left:245.58px;top:374.20px;font-size:18px;color:#000;">100</div>
<div class="t" style="left:334.98px;top:374.20px;font-size:18px;color:#000;">100</div>
<div class="t" style="left:426.89px;top:374.20px;font-size:18px;color:#000;">1,8</div>
<div class="t" style="left:166.19px;top:397.60px;font-size:18px;color:#000;font-weight:bold;">3</div>
<div class="t" style="left:245.58px;top:397.60px;font-size:18px;color:#000;">102</div>
<div class="t" style="left:334.98px;top:397.60px;font-size:18px;color:#000;">100</div>
<div class="t" style="left:426.89px;top:397.60px;font-size:18px;color:#000;">1,8</div>
<div class="t" style="left:166.19px;top:421.00px;font-size:18px;color:#000;font-weight:bold;">4</div>
<div class="t" style="left:245.58px;top:421.00px;font-size:18px;color:#000;">101</div>
<div class="t" style="left:334.98px;top:421.00px;font-size:18px;color:#000;">100</div>
<div class="t" style="left:426.89px;top:421.00px;font-size:18px;color:#000;">1,8</div>
<div class="t" style="left:166.19px;top:444.40px;font-size:18px;color:#000;font-weight:bold;">5</div>
<div class="t" style="left:250.59px;top:444.40px;font-size:18px;color:#000;">99</div>
<div class="t" style="left:334.98px;top:444.40px;font-size:18px;color:#000;">100</div>
<div class="t" style="left:426.89px;top:444.40px;font-size:18px;color:#000;">1,8</div>
<div class="t" style="left:166.19px;top:467.80px;font-size:18px;color:#000;font-weight:bold;">6</div>
<div class="t" style="left:245.58px;top:467.80px;font-size:18px;color:#000;">103</div>
<div class="t" style="left:334.98px;top:467.80px;font-size:18px;color:#000;">100</div>
<div class="t" style="left:426.89px;top:467.80px;font-size:18px;color:#000;">1,8</div>
<div class="t" style="left:166.19px;top:491.20px;font-size:18px;color:#000;font-weight:bold;">7</div>
<div class="t" style="left:250.59px;top:491.20px;font-size:18px;color:#000;">97</div>
<div class="t" style="left:334.98px;top:491.20px;font-size:18px;color:#000;">100</div>
<div class="t" style="left:426.89px;top:491.20px;font-size:18px;color:#000;">1,8</div>
<div class="t" style="left:166.19px;top:514.60px;font-size:18px;color:#000;font-weight:bold;">8</div>
<div class="t" style="left:245.58px;top:514.60px;font-size:18px;color:#000;">100</div>
<div class="t" style="left:334.98px;top:514.60px;font-size:18px;color:#000;">100</div>
<div class="t" style="left:426.89px;top:514.60px;font-size:18px;color:#000;">1,8</div>
<div class="t" style="left:166.19px;top:538.00px;font-size:18px;color:#000;font-weight:bold;">9</div>
<div class="t" style="left:245.58px;top:538.00px;font-size:18px;color:#000;">101</div>
<div class="t" style="left:334.98px;top:538.00px;font-size:18px;color:#000;">100</div>
<div class="t" style="left:426.89px;top:538.00px;font-size:18px;color:#000;">1,8</div>
<div class="t" style="left:161.19px;top:561.40px;font-size:18px;color:#000;font-weight:bold;">10</div>
<div class="t" style="left:250.59px;top:561.40px;font-size:18px;color:#000;">99</div>
<div class="t" style="left:334.98px;top:561.40px;font-size:18px;color:#000;">100</div>
<div class="t" style="left:426.89px;top:561.40px;font-size:18px;color:#000;">1,8</div>
<svg class="s" style="left:485px;top:582px" width="27" height="26" viewBox="0 0 27 26"><rect x="0.5" y="0.5" width="25.3" height="24.3" fill="#fff" stroke="#bdbdbd"/><rect x="4" y="4.6" width="8.2" height="4.7" fill="#2f7bea"/><rect x="12.2" y="4.6" width="8.3" height="4.7" fill="#fff" stroke="#777" stroke-width="0.9"/><rect x="4" y="9.3" width="8.2" height="5.4" fill="#fff" stroke="#777" stroke-width="0.9"/><path d="M4 17.5h0.9M11.3 17.5h0.9M4 19.5h8" stroke="#999" stroke-width="0.8" stroke-dasharray="1.2 1"/><path d="M17.8 14.5v5.7M15 17.35h5.7" stroke="#777" stroke-width="1.8"/></svg>
<svg class="s" style="left:537px;top:194px" width="25" height="51" viewBox="0 0 25 51"><path fill="#ff0000" d="M0.5 16.9V9.5C0.5 3.5 5 0.2 11.6 0.2S23.1 3.5 23.1 9.5V18.7C23.1 21.8 22.2 24 20.4 26.4L8.2 42.3H23.1V49.6H0.9V40.8L15.2 22.8C16.5 21.1 16.9 20 16.9 18.2V10.5C16.9 7.6 15 6.2 12.1 6.2S7.6 7.6 7.6 10.5V16.9z"/></svg>
<svg class="s" style="left:89px;top:321.5px" width="15" height="50" viewBox="0 0 15 50"><path fill="#ff0000" d="M6.7 0.4H13.8V49.4H6.7V11.6H0.4V6.8C3.4 6.6 5.5 4.3 6.7 0.4z"/></svg>
<div id="frame"></div>
</body></html>
